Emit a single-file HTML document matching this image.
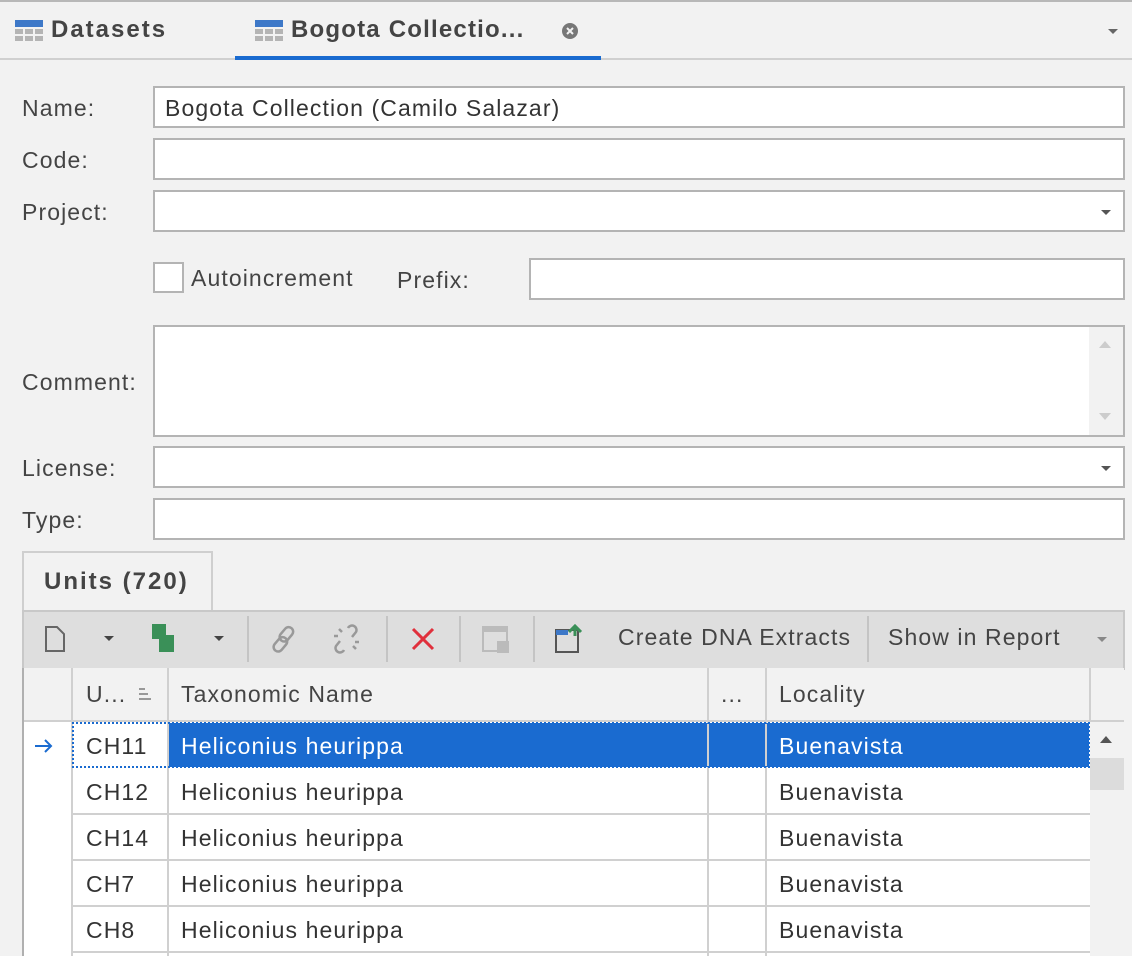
<!DOCTYPE html>
<html><head><style>
*{box-sizing:border-box;margin:0;padding:0}
body{width:1132px;height:956px;background:#f2f2f2;font-family:"Liberation Sans","DejaVu Sans",sans-serif;color:#3c3c3c;position:relative;overflow:hidden;font-size:23px;letter-spacing:1.1px}
.a{position:absolute}
.lbl{position:absolute;left:22px;color:#444;white-space:nowrap}
.inp{position:absolute;left:153px;width:972px;height:42px;background:#fff;border:2px solid #b4b4b4}
.dd::after{content:"";position:absolute;right:12px;top:18px;border-left:5px solid transparent;border-right:5px solid transparent;border-top:5px solid #555}
.t{position:absolute;white-space:nowrap}
.b{font-weight:bold;font-size:24px;letter-spacing:2px;color:#444}
.vl{position:absolute;width:2px;background:#d0d0d0}
.hl{position:absolute;height:2px;background:#d0d0d0}
.sep{position:absolute;top:616px;width:2px;height:46px;background:#c4c4c4}
</style></head><body>
<div class="a" style="left:0;top:0;width:1132px;height:2px;background:#b8b8b8"></div>
<svg class="a" style="left:15px;top:20px" width="28" height="22" viewBox="0 0 28 22"><rect x="0" y="0" width="28" height="7" fill="#3d78c8"/><g fill="#b4b4b4"><rect x="0" y="9" width="8" height="5"/><rect x="10" y="9" width="8" height="5"/><rect x="20" y="9" width="8" height="5"/><rect x="0" y="16" width="8" height="5"/><rect x="10" y="16" width="8" height="5"/><rect x="20" y="16" width="8" height="5"/></g></svg>
<div class="t b" style="left:51px;top:16px">Datasets</div>
<svg class="a" style="left:255px;top:20px" width="28" height="22" viewBox="0 0 28 22"><rect x="0" y="0" width="28" height="7" fill="#3d78c8"/><g fill="#b4b4b4"><rect x="0" y="9" width="8" height="5"/><rect x="10" y="9" width="8" height="5"/><rect x="20" y="9" width="8" height="5"/><rect x="0" y="16" width="8" height="5"/><rect x="10" y="16" width="8" height="5"/><rect x="20" y="16" width="8" height="5"/></g></svg>
<div class="t b" style="left:291px;top:16px;letter-spacing:1.2px">Bogota Collectio...</div>
<svg class="a" style="left:561px;top:22px" width="18" height="18" viewBox="0 0 18 18"><circle cx="9" cy="9" r="8" fill="#777"/><path d="M6 6L12 12M12 6L6 12" stroke="#f2f2f2" stroke-width="2"/></svg>
<div class="a" style="left:1108px;top:29px;border-left:5px solid transparent;border-right:5px solid transparent;border-top:5px solid #666"></div>
<div class="a" style="left:0;top:58px;width:1132px;height:2px;background:#d0d0d0"></div>
<div class="a" style="left:235px;top:56px;width:366px;height:4px;background:#1a6bd0"></div>
<div class="lbl" style="top:95px">Name:</div>
<div class="inp" style="top:86px"><span class="t" style="left:10px;top:7px;color:#333">Bogota Collection (Camilo Salazar)</span></div>
<div class="lbl" style="top:147px">Code:</div>
<div class="inp" style="top:138px"></div>
<div class="lbl" style="top:199px">Project:</div>
<div class="inp dd" style="top:190px"></div>
<div class="a" style="left:153px;top:262px;width:31px;height:31px;background:#fff;border:2px solid #b4b4b4"></div>
<div class="t" style="left:191px;top:265px;color:#444">Autoincrement</div>
<div class="t" style="left:397px;top:267px;color:#444">Prefix:</div>
<div class="inp" style="top:258px;left:529px;width:596px"></div>
<div class="lbl" style="top:369px">Comment:</div>
<div class="inp" style="top:325px;height:112px"><div class="a" style="right:0;top:0;width:34px;height:108px;background:#f2f2f2"></div>
<div class="a" style="right:12px;top:14px;border-left:6px solid transparent;border-right:6px solid transparent;border-bottom:7px solid #ccc"></div>
<div class="a" style="right:12px;top:86px;border-left:6px solid transparent;border-right:6px solid transparent;border-top:7px solid #ccc"></div></div>
<div class="lbl" style="top:455px">License:</div>
<div class="inp dd" style="top:446px"></div>
<div class="lbl" style="top:507px">Type:</div>
<div class="inp" style="top:498px"></div>
<div class="a" style="left:22px;top:551px;width:191px;height:62px;background:#f2f2f2;border:2px solid #cfcfcf;border-bottom:none"></div>
<div class="t b" style="left:44px;top:568px">Units (720)</div>
<div class="a" style="left:22px;top:610px;width:1103px;height:60px;background:#dedede;border:2px solid #c8c8c8"></div>
<div class="a" style="left:212px;top:610px;width:913px;height:2px;background:#c8c8c8"></div>
<svg class="a" style="left:44px;top:626px" width="22" height="26" viewBox="0 0 22 26"><path d="M2 1H13L20 8V25H2Z" fill="none" stroke="#666" stroke-width="2"/></svg>
<div class="a" style="left:104px;top:636px;border-left:5px solid transparent;border-right:5px solid transparent;border-top:5px solid #444"></div>
<svg class="a" style="left:152px;top:624px" width="26" height="30"><rect x="0" y="0" width="14" height="15" fill="#3a9058"/><rect x="7" y="11" width="15" height="17" fill="#3a9058"/></svg>
<div class="a" style="left:214px;top:636px;border-left:5px solid transparent;border-right:5px solid transparent;border-top:5px solid #444"></div>
<div class="sep" style="left:247px"></div>
<svg class="a" style="left:268px;top:624px" width="34" height="30" viewBox="0 0 34 30"><g fill="none" stroke="#999" stroke-width="2.5"><rect x="14" y="2" width="9" height="16" rx="4.5" transform="rotate(40 18 10)"/><rect x="8" y="12" width="9" height="16" rx="4.5" transform="rotate(40 12 20)"/></g></svg>
<svg class="a" style="left:330px;top:624px" width="34" height="30" viewBox="0 0 34 30"><g fill="none" stroke="#999" stroke-width="2.5"><path d="M18 4a4 4 0 0 1 8 4l-4 5"/><path d="M14 26a4 4 0 0 1-8-4l4-5"/><path d="M12 8l-3-3M23 22l3 3M8 12l-4 0M25 18l4 0"/></g></svg>
<div class="sep" style="left:386px"></div>
<svg class="a" style="left:410px;top:626px" width="26" height="26"><path d="M3 3L23 23M23 3L3 23" stroke="#e0303c" stroke-width="3"/></svg>
<div class="sep" style="left:459px"></div>
<svg class="a" style="left:482px;top:626px" width="30" height="28"><rect x="1" y="1" width="24" height="24" fill="none" stroke="#bbb" stroke-width="2"/><rect x="1" y="1" width="24" height="5" fill="#bbb"/><rect x="15" y="15" width="12" height="12" fill="#bbb"/></svg>
<div class="sep" style="left:533px"></div>
<svg class="a" style="left:555px;top:624px" width="34" height="32"><rect x="1" y="6" width="22" height="22" fill="none" stroke="#555" stroke-width="2"/><rect x="1" y="6" width="12" height="5" fill="#3d78c8"/><path d="M14 8L20 2L26 8M20 3V12" fill="none" stroke="#3a9058" stroke-width="3"/></svg>
<div class="t" style="left:618px;top:624px;color:#444">Create DNA Extracts</div>
<div class="sep" style="left:867px"></div>
<div class="t" style="left:888px;top:624px;color:#444">Show in Report</div>
<div class="a" style="left:1097px;top:637px;border-left:5px solid transparent;border-right:5px solid transparent;border-top:5px solid #888"></div>
<div class="a" style="left:22px;top:668px;width:2px;height:288px;background:#b0b0b0"></div>
<div class="a" style="left:24px;top:668px;width:1100px;height:54px;background:#f2f2f2"></div>
<div class="a" style="left:24px;top:722px;width:1066px;height:234px;background:#fff"></div>
<div class="a" style="left:1090px;top:722px;width:34px;height:234px;background:#f2f2f2"></div>
<div class="a" style="left:1090px;top:758px;width:34px;height:32px;background:#dcdcdc"></div>
<div class="a" style="left:1100px;top:736px;border-left:6px solid transparent;border-right:6px solid transparent;border-bottom:7px solid #555"></div>
<div class="hl" style="left:24px;top:720px;width:1100px"></div>
<div class="vl" style="left:71px;top:668px;height:288px"></div>
<div class="vl" style="left:167px;top:668px;height:288px"></div>
<div class="vl" style="left:707px;top:668px;height:288px"></div>
<div class="vl" style="left:765px;top:668px;height:288px"></div>
<div class="vl" style="left:1089px;top:668px;height:54px"></div>
<div class="hl" style="left:72px;top:813px;width:1018px"></div>
<div class="hl" style="left:72px;top:859px;width:1018px"></div>
<div class="hl" style="left:72px;top:905px;width:1018px"></div>
<div class="hl" style="left:72px;top:951px;width:1018px"></div>
<div class="t" style="left:86px;top:681px;color:#444">U...</div>
<div class="a" style="left:139px;top:688px;width:6px;height:2px;background:#999"></div>
<div class="a" style="left:139px;top:693px;width:9px;height:2px;background:#999"></div>
<div class="a" style="left:139px;top:698px;width:12px;height:2px;background:#999"></div>
<div class="t" style="left:181px;top:681px;color:#444">Taxonomic Name</div>
<div class="t" style="left:721px;top:681px;color:#444">...</div>
<div class="t" style="left:779px;top:681px;color:#444">Locality</div>
<div class="a" style="left:169px;top:723px;width:920px;height:44px;background:#1a6bd0"></div>
<div class="a" style="left:72px;top:722px;width:1018px;height:46px;border:2px dotted #1a6bd0"></div>
<div class="vl" style="left:707px;top:724px;height:42px"></div>
<div class="vl" style="left:765px;top:724px;height:42px"></div>
<svg class="a" style="left:34px;top:738px" width="20" height="16"><path d="M1 8H17M11 2L17 8L11 14" fill="none" stroke="#1a6bd0" stroke-width="2"/></svg>
<div class="t" style="left:86px;top:733px;color:#333">CH11</div>
<div class="t" style="left:181px;top:733px;color:#fff">Heliconius heurippa</div>
<div class="t" style="left:779px;top:733px;color:#fff">Buenavista</div>
<div class="t" style="left:86px;top:779px;color:#333">CH12</div><div class="t" style="left:181px;top:779px;color:#333">Heliconius heurippa</div><div class="t" style="left:779px;top:779px;color:#333">Buenavista</div>
<div class="t" style="left:86px;top:825px;color:#333">CH14</div><div class="t" style="left:181px;top:825px;color:#333">Heliconius heurippa</div><div class="t" style="left:779px;top:825px;color:#333">Buenavista</div>
<div class="t" style="left:86px;top:871px;color:#333">CH7</div><div class="t" style="left:181px;top:871px;color:#333">Heliconius heurippa</div><div class="t" style="left:779px;top:871px;color:#333">Buenavista</div>
<div class="t" style="left:86px;top:917px;color:#333">CH8</div><div class="t" style="left:181px;top:917px;color:#333">Heliconius heurippa</div><div class="t" style="left:779px;top:917px;color:#333">Buenavista</div>
</body></html>
